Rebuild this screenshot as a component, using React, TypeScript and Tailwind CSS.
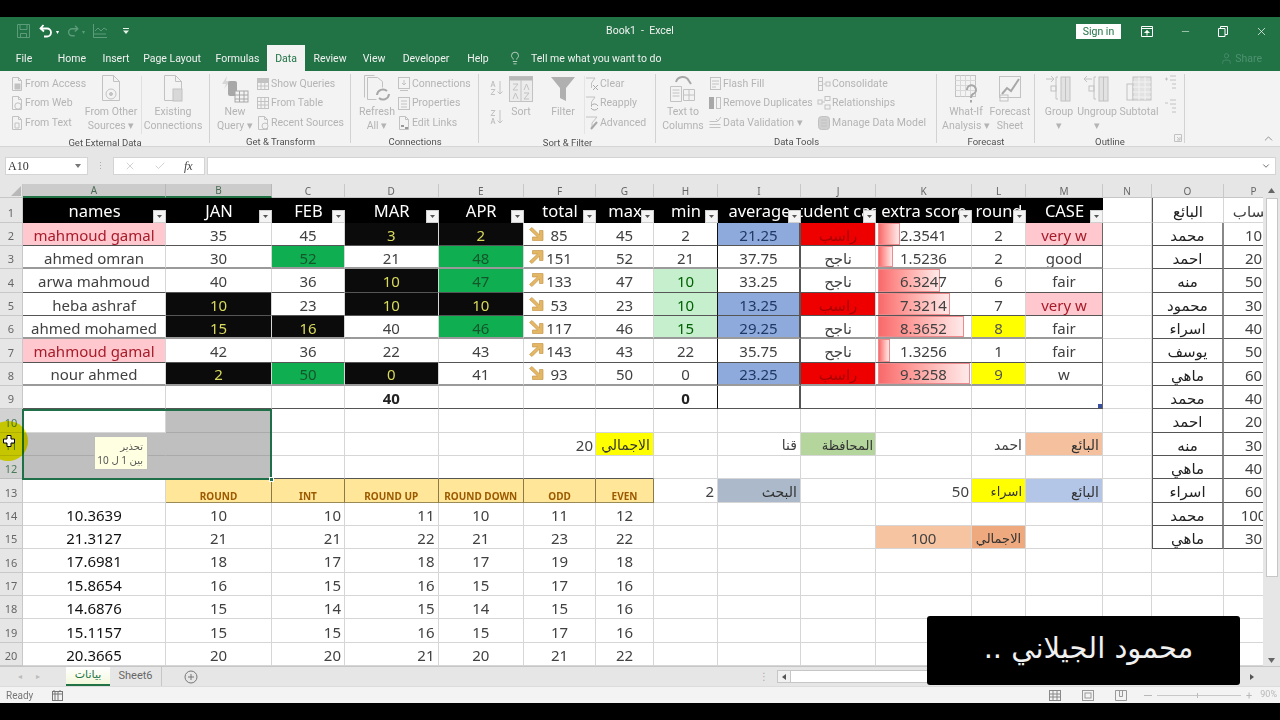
import React from "react";
import { X, Check, Minus, ChevronUp, ChevronDown, Lightbulb, User } from "lucide-react";

const S = "#c2c2c2";
const Svg = ({ w, h, children, className = "" }: { w: number; h: number; children: React.ReactNode; className?: string }) => (
  <svg width={w} height={h} viewBox={`0 0 ${w} ${h}`} fill="none" stroke={S} strokeWidth="1" className={"shrink-0 " + className}>
    {children}
  </svg>
);
const SmallDoc = ({ b }: { b?: React.ReactNode }) => (
  <Svg w={14} h={16}>
    <path d="M2.5 1.5h6l3 3v10h-9z" />
    <path d="M8.5 1.5v3h3" />
    {b}
  </Svg>
);
const Grid4 = ({ hd }: { hd?: boolean }) => (
  <Svg w={14} h={16}>
    <rect x="1.5" y="2.5" width="11" height="11" />
    {hd && <rect x="1.5" y="2.5" width="11" height="3" fill={S} />}
    <path d="M1.5 6.5h11M1.5 10h11M5 2.5v11M8.8 2.5v11" />
  </Svg>
);
const BigDoc = ({ children }: { children?: React.ReactNode }) => (
  <Svg w={30} h={30}>
    <path d="M6.5 1.5h11l6 6v19h-17z" />
    <path d="M17.5 1.5v6h6" />
    {children}
  </Svg>
);
const Tiny = ({ children }: { children: React.ReactNode }) => <span className="whitespace-nowrap leading-[12px]">{children}</span>;
const Big = ({ w, icon, l1, l2 }: { w: number; icon: React.ReactNode; l1: string; l2: string }) => (
  <div style={{ width: w }} className="flex flex-col items-center shrink-0">
    <div className="h-[33px] flex items-center justify-center">{icon}</div>
    <div className="text-center leading-[14px] whitespace-nowrap">{l1}</div>
    <div className="text-center leading-[14px] whitespace-nowrap">{l2}</div>
  </div>
);
const Small = ({ w, items }: { w: number; items: [React.ReactNode, string][] }) => (
  <div style={{ width: w }} className="flex flex-col shrink-0 pt-[2px]">
    {items.map(([ic, t]) => (
      <div key={t} className="h-[19.5px] flex items-center gap-[1px]">
        {ic}
        <Tiny>{t}</Tiny>
      </div>
    ))}
  </div>
);
const Group = ({ w, label, pl = 0, children }: { w: number; label: string; pl?: number; children: React.ReactNode }) => (
  <div style={{ width: w }} className="relative shrink-0 flex flex-col h-full">
    <div style={{ paddingLeft: pl }} className="flex-1 flex items-start pt-[1px]">{children}</div>
    <div className="h-[14px] text-center text-[9.5px] leading-[17px] text-[#505050]">{label}</div>
    <div className="absolute right-0 top-[3px] bottom-[3px] w-px bg-[#d2d2d2]" />
  </div>
);

const Ribbon = () => (
  <div className="h-[76px] flex bg-[#f3f3f3] text-[#b4b4b4] border-b border-[#d5d5d5] text-[10.5px] relative font-['Roboto',sans-serif]">
    <Group w={210} label="Get External Data" pl={10}>
      <Small w={74} items={[
        [<SmallDoc b={<rect x="5" y="8" width="5" height="5" fill={S} />} />, "From Access"],
        [<SmallDoc b={<circle cx="8" cy="11" r="3.2" />} />, "From Web"],
        [<SmallDoc b={<path d="M5 8h4v5H5z" />} />, "From Text"],
      ]} />
      <Big w={54} l1="From Other" l2="Sources ▾" icon={<BigDoc><circle cx="15" cy="20" r="5" fill="#f3f3f3" /><circle cx="15" cy="20" r="1.5" fill={S} /></BigDoc>} />
      <div className="w-px h-[58px] bg-[#e0e0e0] mt-[4px] mx-[3px]" />
      <Big w={56} l1="Existing" l2="Connections" icon={<BigDoc><rect x="15" y="15" width="9" height="12" fill="#d8d8d8" /></BigDoc>} />
    </Group>
    <Group w={141} label="Get & Transform" pl={6}>
      <Big w={38} l1="New" l2="Query ▾" icon={
        <Svg w={32} h={30}>
          <path d="M8 2 3 10h4l-2 5 6-8H7z" fill="#d6d6d6" stroke="none" />
          <rect x="9" y="7" width="9" height="15" rx="2" fill="#a8a8a8" stroke="none" />
          <rect x="16" y="17" width="13" height="11" fill="#f3f3f3" stroke="#a8a8a8" />
          <path d="M16 21h13M16 25h13M20.5 17v11M25 17v11" stroke="#a8a8a8" />
        </Svg>} />
      <div className="w-[2px]" />
      <Small w={95} items={[[<Grid4 hd />, "Show Queries"], [<Grid4 />, "From Table"], [<SmallDoc b={<circle cx="9" cy="11" r="3" fill="#f3f3f3" />} />, "Recent Sources"]]} />
    </Group>
    <Group w={128} label="Connections" pl={8}>
      <Big w={36} l1="Refresh" l2="All ▾" icon={
        <Svg w={30} h={30}>
          <path d="M5.5 3.5h10l5 4v6M5.5 3.5v22h9" />
          <path d="M2.5 1.5h10M2.5 1.5v22" />
          <path d="M15 21a6 6 0 0 1 10-4M27 20a6 6 0 0 1-10 4" stroke="#a8a8a8" strokeWidth="2" />
        </Svg>} />
      <div className="w-[2px]" />
      <Small w={78} items={[
        [<Svg w={14} h={16}><rect x="1.5" y="1.5" width="11" height="11" /><path d="M7 4v5M5 7l2 2 2-2M3 14.5h8" /></Svg>, "Connections"],
        [<Svg w={14} h={16}><rect x="1.5" y="2.5" width="11" height="12" /><path d="M4 6h6M4 9h6M4 12h6" /></Svg>, "Properties"],
        [<SmallDoc b={<path d="M4 11h3M8 13h3" stroke="#9a9a9a" strokeWidth="2" />} />, "Edit Links"],
      ]} />
    </Group>
    <Group w={177} label="Sort & Filter" pl={10}>
      <div className="w-[20px] flex flex-col gap-[11px] pt-[7px]">
        <Svg w={16} h={18}><path d="M11 2v13M8.5 12.5 11 15l2.5-2.5" /><path d="M2 8l2-6 2 6M2.8 6h2.4M2 10.5h4l-4 5h4" /></Svg>
        <Svg w={16} h={18}><path d="M11 2v13M8.5 12.5 11 15l2.5-2.5" /><path d="M2 2.5h4l-4 5h4M2 16l2-6 2 6M2.8 14h2.4" /></Svg>
      </div>
      <Big w={24} l1="Sort" l2="" icon={
        <Svg w={26} h={28}><rect x="1.5" y="1.5" width="23" height="25" fill="#ececec" /><rect x="1.5" y="1.5" width="23" height="4" fill="#b8b8b8" stroke="none" /><path d="M13 5v21" /><path d="M5 9h5l-5 6h5M16 15l2.5-6 2.5 6M5 24l2.5-6 2.5 6M16 18h5l-5 6h5" /></Svg>} />
      <div className="w-[9px]" />
      <Big w={42} l1="Filter" l2="" icon={<Svg w={26} h={28}><path d="M1 2h24l-9 11v13l-6-3V13z" fill="#b0b0b0" stroke="none" /></Svg>} />
      <div className="w-px h-[58px] bg-[#e4e4e4] mt-[4px]" />
      <Small w={62} items={[
        [<Svg w={14} h={16}><path d="M1 2h9L6.5 7v5" /><path d="M8 9l5 5M13 9l-5 5" stroke="#a8a8a8" /></Svg>, "Clear"],
        [<Svg w={14} h={16}><path d="M1 2h9L6.5 7v5" /><path d="M6 11a4 4 0 0 1 7 0M13 13a4 4 0 0 1-7 0" stroke="#a8a8a8" /></Svg>, "Reapply"],
        [<Svg w={14} h={16}><path d="M1 2h11L7 8v5" /><path d="M6 14l6-7" stroke="#a8a8a8" strokeWidth="2" /></Svg>, "Advanced"],
      ]} />
    </Group>
    <Group w={281} label="Data Tools" pl={8}>
      <Big w={38} l1="Text to" l2="Columns" icon={
        <Svg w={30} h={30}><path d="M8 8a7 7 0 0 1 13-1l2 3" stroke="#a8a8a8" strokeWidth="2" /><path d="M2.5 12.5h11v15h-11zM4.5 16h7M4.5 19h7M4.5 22h7M15.5 15.5h11v11h-11zM15.5 21h11M21 15.5v11" /></Svg>} />
      <div className="w-[6px]" />
      <Small w={109} items={[
        [<Svg w={14} h={16}><rect x="2.5" y="1.5" width="10" height="12" /><path d="M4 5h7M4 8h7M4 11h4" /></Svg>, "Flash Fill"],
        [<Svg w={14} h={16}><rect x="1" y="2" width="5" height="12" fill="#a8a8a8" stroke="none" /><rect x="8.5" y="2.5" width="4" height="11" /></Svg>, "Remove Duplicates"],
        [<Svg w={14} h={16}><path d="M1.5 6.5h8M1.5 9.5h11M1.5 12.5h11M8 4l2 2 3-4" /></Svg>, "Data Validation   ▾"],
      ]} />
      <Small w={115} items={[
        [<Svg w={14} h={16}><rect x="1.5" y="1.5" width="4" height="13" /><path d="M1.5 5.5h4M1.5 9.5h4M6.5 8h2" /><rect x="9" y="6" width="4" height="4" /></Svg>, "Consolidate"],
        [<Svg w={14} h={16}><rect x="1" y="5" width="4" height="4" /><rect x="8" y="1.5" width="5" height="4" /><rect x="8" y="10" width="5" height="4" /><path d="M5 7h3" /></Svg>, "Relationships"],
        [<Svg w={14} h={16}><rect x="1.5" y="1.5" width="11" height="13" rx="3" fill="#d0d0d0" /><path d="M4 5h6M4 8h6M4 11h6" /></Svg>, "Manage Data Model"],
      ]} />
    </Group>
    <Group w={98} label="Forecast" pl={4}>
      <Big w={50} l1="What-If" l2="Analysis ▾" icon={
        <Svg w={24} h={30}><rect x="1.5" y="1.5" width="20" height="21" /><path d="M1.5 6.5h20M1.5 11.5h20M1.5 16.5h20M6.5 1.5v21M11.5 1.5v21M16.5 1.5v21" stroke="#d8d8d8" /><path d="M13 16a4.5 4.5 0 1 1 6 4c-2 1-2 2-2 4M17 26v2.5" stroke="#a8a8a8" strokeWidth="2" /></Svg>} />
      <Big w={38} l1="Forecast" l2="Sheet" icon={
        <Svg w={24} h={30}><rect x="1.5" y="2.5" width="21" height="21" /><path d="M4 20l5-6 4 3 8-12" stroke="#a8a8a8" strokeWidth="2" /><rect x="2" y="21" width="8" height="6" /></Svg>} />
    </Group>
    <Group w={150} label="Outline" pl={5}>
      <Big w={38} l1="Group" l2="▾" icon={
        <Svg w={28} h={28}><path d="M1 4h8M6 1l3 3-3 3" /><path d="M13 2h-2v22h2" /><rect x="6" y="11" width="5" height="5" /><rect x="16" y="2" width="9" height="24" fill="#e2e2e2" /><path d="M20.5 2v24" /></Svg>} />
      <Big w={38} l1="Ungroup" l2="▾" icon={
        <Svg w={28} h={28}><path d="M9 4H1M4 1 1 4l3 3" /><path d="M13 2h-2v22h2" /><rect x="6" y="11" width="5" height="5" /><rect x="16" y="2" width="9" height="24" fill="#e2e2e2" /><path d="M20.5 2v24" /></Svg>} />
      <Big w={46} l1="Subtotal" l2="" icon={
        <Svg w={28} h={28}><rect x="2" y="9" width="6" height="16" /><rect x="8" y="2" width="18" height="23" fill="#e2e2e2" /><path d="M8 7h18M8 12h18M8 17h18M8 22h18M14 2v23M20 2v23" stroke="#f3f3f3" /></Svg>} />
      <div className="w-[16px] flex flex-col gap-[5px] pl-[2px] pt-[2px]">
        <Svg w={13} h={19}><path d="M1 5h3M2.5 3.5v3M6 2h6M6 6h6M8 10h4M8 14h4" /></Svg>
        <Svg w={13} h={19}><path d="M1 5h3M6 2h6M6 6h6M8 10h4M8 14h4" /></Svg>
      </div>
      <Svg w={8} h={8} className="absolute right-[3px] bottom-[4px]"><path d="M.5.5h7v7h-7zM3 3l3 3M3 6h3V3" /></Svg>
    </Group>
    <div className="flex-1 relative">
      <ChevronUp size={13} strokeWidth={1.25} className="absolute right-[5px] bottom-[1px] text-[#666]" />
    </div>
  </div>
);

const tabs: [string, number][] = [["File", 48], ["Home", 48], ["Insert", 40], ["Page Layout", 72], ["Formulas", 59], ["Data", 38], ["Review", 50], ["View", 38], ["Developer", 66], ["Help", 38]];

const TitleBar = () => (
  <div className="h-[54px] bg-[#217346] text-white font-['Roboto',sans-serif]">
    <div className="h-[28px] flex items-center relative">
      <div className="flex items-center pl-[17px]">
        <svg width="13" height="14" viewBox="0 0 13 14" fill="none" stroke="#5c9c7a"><path d="M.5.5h12v13H.5zM3 .5v5h7v-5M3.5 13.5v-4h6v4" /></svg>
        <svg width="16" height="16" viewBox="0 0 16 16" fill="none" stroke="#fff" strokeWidth="1.8" className="ml-[8px]"><path d="M5.5 2 2.5 5.5l3.5 3M3 5.5h6a3.7 3.7 0 0 1 0 8H6" /></svg>
        <span className="ml-[2px] text-[6px] text-white">▾</span>
        <svg width="14" height="14" viewBox="0 0 16 16" fill="none" stroke="#5c9c7a" strokeWidth="1.6" className="ml-[7px]"><path d="M10.5 2l3 3.5-3.5 3M13 5.5H7a3.7 3.7 0 0 0 0 8h3" /></svg>
        <span className="ml-[2px] text-[6px] text-[#5c9c7a]">▾</span>
        <svg width="14" height="14" viewBox="0 0 14 14" fill="none" stroke="#5c9c7a" className="ml-[8px]"><path d="M.5 0v13.5H14M2 7l3-3 3 3 3-3 3 2M1 10h12" /></svg>
        <svg width="7" height="8" viewBox="0 0 7 8" fill="#e8f0ea" className="ml-[16px]"><path d="M0 1h6v1H0zM0 3.5h6L3 7z" /></svg>
      </div>
      <div className="absolute left-0 right-0 top-0 h-full flex items-center justify-center text-[10.5px] text-[#f2f2f2] pointer-events-none">Book1&nbsp;&nbsp;-&nbsp;&nbsp;Excel</div>
      <div className="ml-auto flex items-center">
        <div className="w-[45px] h-[15px] bg-white text-[#217346] text-[10.5px] leading-[15px] text-center mr-[7px]">Sign in</div>
        <div className="w-[38px] flex justify-center">
          <svg width="12" height="11" viewBox="0 0 12 11" fill="none" stroke="#fff"><path d="M.5.5h11v10H.5zM.5 2.5h11" /><path d="M3.5 7 6 4.5 8.5 7M6 4.5v5" fill="#fff" /></svg>
        </div>
        <div className="w-[38px] flex justify-center"><Minus size={11} strokeWidth={1.2} /></div>
        <div className="w-[38px] flex justify-center">
          <svg width="10" height="11" viewBox="0 0 10 11" fill="none" stroke="#fff"><path d="M.5 2.5h6.5v8H.5zM2.5 2.5v-2h7v8H7" /></svg>
        </div>
        <div className="w-[38px] flex justify-center"><X size={13} strokeWidth={1.3} /></div>
      </div>
    </div>
    <div className="h-[26px] flex text-[10.5px] leading-[27px] relative">
      {tabs.map(([t, w]) => (
        <div key={t} style={{ width: w }} className={"text-center shrink-0 " + (t === "Data" ? "bg-[#f3f3f3] text-[#217346]" : "text-[#f1f1f1]")}>{t}</div>
      ))}
      <Lightbulb size={14} strokeWidth={1.2} className="ml-[11px] mt-[6px] text-[#f1f1f1]" />
      <span className="ml-[9px] text-[#f1f1f1]">Tell me what you want to do</span>
      <div className="ml-auto mr-[18px] flex items-center gap-[2px] text-[#4f9270]">
        <User size={13} strokeWidth={1.3} />
        <span>Share</span>
      </div>
    </div>
  </div>
);

const FormulaBar = () => (
  <div className="h-[37px] bg-[#e6e6e6] pt-[10px] flex items-start">
    <div className="ml-[5px] w-[83px] h-[18px] bg-white border border-[#d4d4d4] flex items-center justify-between px-[2px] text-[12px] text-[#333] font-['Liberation_Serif',serif]">
      <span>A10</span>
      <svg width="6" height="4" className="mr-[4px]"><path d="M0 0h6L3 4z" fill="#777" /></svg>
    </div>
    <div className="w-[25px] h-[18px] flex items-center justify-center text-[#aaa] text-[9px]">⋮</div>
    <div className="w-[92px] h-[18px] bg-white border border-[#d4d4d4] flex items-center">
      <X size={12} strokeWidth={1.2} className="ml-[10px] text-[#b4b4b4]" />
      <Check size={12} strokeWidth={1.2} className="ml-[18px] text-[#b4b4b4]" />
      <span className="ml-[18px] text-[12px] italic font-['Liberation_Serif',serif] text-[#444] leading-none">fx</span>
    </div>
    <div className="ml-[2px] w-[1069px] h-[18px] bg-white border border-[#d4d4d4] flex items-center justify-end pr-[4px]">
      <ChevronDown size={10} strokeWidth={2} className="text-[#555]" />
    </div>
  </div>
);

const PINK = "bg-[#ffc7ce] text-[#a61c2a]";
const BLK = "bg-[#0b0b0b] text-[#d9d95c]";
const GRN = "bg-[#0fae50] text-[#14562c]";
const LG = "bg-[#c6efce] text-[#006100]";
const BLUE = "bg-[#8ea9db] text-[#1f3864]";
const RED = "bg-[#ef0000] text-[#a80000]";
const YEL = "bg-[#ffff00] text-[#555555]";
const STY: Record<string, string> = { P: PINK, K: BLK, G: GRN, L: LG, B: BLUE, R: RED, Y: YEL };

const T: string[][] = [
  ["mahmoud gamal|P", "35", "45", "3|K", "2|K", "85|d", "45", "2", "21.25|B", "راسب|R", "2.3541", "2", "very w|P"],
  ["ahmed omran", "30", "52|G", "21", "48|G", "151|u", "52", "21", "37.75", "ناجح", "1.5236", "2", "good"],
  ["arwa mahmoud", "40", "36", "10|K", "47|G", "133|u", "47", "10|L", "33.25", "ناجح", "6.3247", "6", "fair"],
  ["heba ashraf", "10|K", "23", "10|K", "10|K", "53|d", "23", "10|L", "13.25|B", "راسب|R", "7.3214", "7", "very w|P"],
  ["ahmed mohamed", "15|K", "16|K", "40", "46|G", "117|d", "46", "15|L", "29.25|B", "ناجح", "8.3652", "8|Y", "fair"],
  ["mahmoud gamal|P", "42", "36", "22", "43", "143|u", "43", "22", "35.75", "ناجح", "1.3256", "1", "fair"],
  ["nour ahmed", "2|K", "50|G", "0|K", "41", "93|d", "50", "0", "23.25|B", "راسب|R", "9.3258", "9|Y", "w"],
];
const BARS = [22, 15, 62, 72, 86, 12, 92];
const HEAD = ["names", "JAN", "FEB", "MAR", "APR", "total", "max", "min", "average", "student case", "extra score", "round", "CASE"];
const COLS = "ABCDEFGHIJKLMNOP".split("");
const LOWER: string[][] = [
  ["10.3639", "10", "10", "11", "10", "11", "12"],
  ["21.3127", "21", "21", "22", "21", "23", "22"],
  ["17.6981", "18", "17", "18", "17", "19", "18"],
  ["15.8654", "16", "15", "16", "15", "17", "16"],
  ["14.6876", "15", "14", "15", "14", "15", "16"],
  ["15.1157", "15", "15", "16", "15", "17", "16"],
  ["20.3665", "20", "20", "21", "20", "21", "22"],
];
const SELLER = ["محمد", "احمد", "منه", "محمود", "اسراء", "يوسف", "ماهي", "محمد", "احمد", "منه", "ماهي", "اسراء", "محمد", "ماهي"];
const ACC = ["10", "20", "50", "30", "40", "50", "60", "40", "20", "30", "40", "60", "100", "30"];

const Arrow = ({ up }: { up: boolean }) => (
  <svg width="16" height="16" viewBox="0 0 16 16" fill="#e4b766" stroke="#c79a4c" strokeWidth="0.7" className={"shrink-0 ml-[4px] -mt-[3px] " + (up ? "-scale-y-100" : "")}>
    <path d="M1.5 3.5 4 1.5l7.5 7.5V4.5H15V14.5H4.5V11H9.5z" />
  </svg>
);
const FilterBtn = () => (
  <div className="absolute right-0 bottom-0 w-[13px] h-[13px] bg-[#f4f4f4] border border-[#cfcfcf] flex items-center justify-center">
    <svg width="5" height="3"><path d="M0 0h5L2.5 3z" fill="#555" /></svg>
  </div>
);

const BASE = "relative flex items-center overflow-hidden whitespace-nowrap border-r border-b pt-[3px]";

const cellFor = (col: string, r: number): { t?: React.ReactNode; k: string } => {
  const ci = COLS.indexOf(col);
  let b = "border-r-[#d6d6d6] border-b-[#d6d6d6]";
  let k = "justify-center";
  let t: React.ReactNode = undefined;
  if (col === "N") return { k: "border-r-[#d6d6d6] border-b-[#d6d6d6]" };
  if (col === "O" || col === "P") {
    if (r <= 15) {
      b = col === "O" ? "border-l border-l-[#555] border-r-2 border-r-[#888] border-b-[#555]" : "border-r-[#d6d6d6] border-b-[#555]";
      if (r === 1) { b = col === "O" ? "border-l border-l-[#555] border-r-[#d6d6d6] border-b-[#d6d6d6]" : "border-r-[#d6d6d6] border-b-[#d6d6d6]"; }
      t = r === 1 ? (col === "O" ? "البائع" : "حساب") : col === "O" ? SELLER[r - 2] : ACC[r - 2];
      if (col === "O") k = "justify-center text-[#222]";
    }
    return { t, k: `${k} ${b}` };
  }
  if (r >= 2 && r <= 9) {
    const thick = r === 3 || r === 6 || r === 8;
    b = (thick ? "border-b-2 border-b-[#9a9a9a] " : "border-b-[#555] ") + "border-r-[#d6d6d6]";
    if (col === "M") b = (thick ? "border-b-2 border-b-[#9a9a9a] " : "border-b-[#555] ") + "border-r-[#666]";
    if (col === "H") b = (thick ? "border-b-2 border-b-[#9a9a9a] " : "border-b-[#555] ") + "border-r-[#111]";
    if (col === "I") b = (thick ? "border-b-2 border-b-[#9a9a9a] " : "border-b-[#555] ") + "border-r-2 border-r-[#555]";
  }
  if (r === 9) {
    if (col === "D") { t = "40"; k = "justify-center font-bold text-[#222]"; }
    if (col === "H") { t = "0"; k = "justify-center font-bold text-[#222]"; }
  }
  if (r === 12 && "BCDEFG".includes(col)) b = "border-b-[#555] border-r-[#d6d6d6]";
  if (r >= 2 && r <= 8 && ci <= 12) {
    const [v, s] = T[r - 2][ci].split("|");
    t = v;
    if (s === "u" || s === "d") {
      t = (
        <>
          <Arrow up={s === "u"} />
          <span className="w-[30px] text-center">{v}</span>
        </>
      );
      k = "justify-start";
    } else if (s) k = `justify-center ${STY[s]}`;
    if (col === "K") {
      t = (
        <>
          <div style={{ width: BARS[r - 2] }} className="absolute left-[2px] top-0 bottom-0 border border-[#ee8a8b] bg-gradient-to-r from-[#f8696b] to-[#fdeaea]" />
          <span className="relative">{v}</span>
        </>
      );
    }
  }
  const sp = (text: string, cls: string) => { t = text; k = cls; };
  if (r === 11) {
    if (col === "F") sp("20", "justify-end pr-[2px]");
    if (col === "G") sp("الاجمالي", "justify-end pr-[3px] bg-[#ffff00] text-[#333] text-[14px]");
    if (col === "I") sp("قنا", "justify-end pr-[3px] text-[14px]");
    if (col === "J") sp("المحافظة", "justify-end pr-[2px] bg-[#b4d59c] text-[#333] text-[13px]");
    if (col === "L") sp("احمد", "justify-end pr-[3px] text-[14px]");
    if (col === "M") sp("البائع", "justify-end pr-[3px] bg-[#f5c09d] text-[#333] text-[14px]");
  }
  if (r === 13) {
    if (ci >= 1 && ci <= 6) {
      t = ["ROUND", "INT", "ROUND UP", "ROUND DOWN", "ODD", "EVEN"][ci - 1];
      k = "justify-center items-end !pt-0 pb-[1px] bg-[#ffe699] text-[#9c5a00] font-bold text-[10px]";
      b = "border-b-[#9a8a55] border-r-[#8a7a4a]";
    }
    if (col === "H") sp("2", "justify-end pr-[3px]");
    if (col === "I") sp("البحث", "justify-end pr-[3px] bg-[#acb9ca] text-[#333] text-[14px]");
    if (col === "K") sp("50", "justify-end pr-[2px]");
    if (col === "L") sp("اسراء", "justify-end pr-[3px] bg-[#ffff00] text-[#333] text-[13px]");
    if (col === "M") sp("البائع", "justify-end pr-[3px] bg-[#b4c6e7] text-[#333] text-[14px]");
  }
  if (r === 15) {
    if (col === "K") sp("100", "justify-center bg-[#f6c4a0]");
    if (col === "L") sp("الاجمالي", "justify-center bg-[#eea97f] text-[#333] text-[13px]");
  }
  if (r >= 14 && ci <= 6) {
    t = LOWER[r - 14][ci];
    k = ci === 0 ? "justify-center text-[#111]" : ci === 2 || ci === 3 ? "justify-end pr-[3px]" : "justify-center";
  }
  if (r === 10 || r === 11 || r === 12) {
    if (col === "B" || (col === "A" && r > 10)) k = "bg-[#bfbfbf]";
    if (col === "A" && r > 10) b = "border-r-[#bfbfbf] border-b-[#aaaaaa]";
    if (col === "B") b = "border-r-[#bfbfbf] border-b-[#aaaaaa]";
  }
  return { t, k: `${k} ${b}` };
};

const Sheet = () => {
  const out: React.ReactNode[] = [];
  out.push(
    <div key="corner" className="bg-[#e6e6e6] border-r border-b border-[#c6c6c6] relative">
      <svg width="10" height="10" className="absolute right-[1px] bottom-[1px]"><path d="M10 0v10H0z" fill="#b8b8b8" /></svg>
    </div>
  );
  COLS.forEach((c) => {
    const on = c === "A" || c === "B";
    out.push(
      <div key={"h" + c} className={"flex items-center justify-center text-[10px] border-r " + (on ? "bg-[#cbcbcb] text-[#4a6b56] border-[#b8b8b8] border-b-2 border-b-[#217346]" : "bg-[#e6e6e6] text-[#666] border-[#c8c8c8] border-b border-b-[#c6c6c6]")}>{c}</div>
    );
  });
  for (let r = 1; r <= 20; r++) {
    const on = r >= 10 && r <= 12;
    out.push(
      <div key={"r" + r} className={"flex items-end justify-center pb-[2px] text-[11px] leading-[14px] border-r border-b " + (on ? "bg-[#d2d2d2] text-[#4a7a5a] border-[#bbb] border-r-[#217346]" : "bg-[#e6e6e6] text-[#666] border-[#c8c8c8]")}>{r}</div>
    );
    COLS.forEach((col, ci) => {
      if (r === 1 && ci <= 12) {
        out.push(
          <div key={col + r} className="relative bg-black text-white text-[16.5px] pt-[1px] flex items-center justify-center overflow-hidden whitespace-nowrap">
            <span>{HEAD[ci]}</span>
            <FilterBtn />
          </div>
        );
        return;
      }
      const { t, k } = cellFor(col, r);
      const marker = col === "M" && r === 9;
      out.push(
        <div key={col + r} className={`${BASE} ${k}`}>
          {t}
          {marker && <div className="absolute right-0 bottom-0 w-[4px] h-[4px] bg-[#3b4fa0]" />}
        </div>
      );
    });
  }
  return (
    <div className="relative w-[1263px] h-[482px] overflow-hidden bg-white text-[15px] leading-none text-[#414141] font-['Noto_Sans','DejaVu_Sans',sans-serif]">
      <div className="grid grid-cols-[23px_143px_106px_73px_93.5px_85.5px_72px_58px_64px_83px_75px_96px_54px_77px_49px_72px_60px] grid-rows-[14px_24.5px] auto-rows-[23.35px]">
        {out}
      </div>
      {/* selection outline */}
      <div className="absolute left-[22px] top-[225px] w-[250px] h-[71px] border-2 border-[#1f7048]" />
      <div className="absolute left-[269px] top-[293px] w-[5px] h-[5px] bg-[#1f7048] border border-white" />
      {/* validation tooltip */}
      <div dir="rtl" className="absolute left-[94px] top-[252px] w-[54px] h-[34px] bg-[#ffffe1] border border-[#bdbdbd] pr-[4px] pt-[2px] text-[10px] leading-[14px] text-[#555]">
        <div>تحذير</div>
        <div>بين 1 ل 10</div>
      </div>
      {/* pointer highlight */}
      <div className="absolute left-[-12px] top-[237px] w-[40px] h-[40px] rounded-full bg-[#f0f000] mix-blend-multiply" />
      <svg width="12" height="12" viewBox="0 0 12 12" className="absolute left-[3px] top-[251px]"><path d="M4 .5h4V4h3.5v4H8v3.5H4V8H.5V4H4z" fill="#fff" stroke="#000" /></svg>
    </div>
  );
};

const VScroll = () => (
  <div className="w-[17px] h-[482px] bg-[#e6e6e6] relative flex flex-col items-center">
    <svg width="7" height="5" className="mt-[4px]"><path d="M3.5 0 7 5H0z" fill="#666" /></svg>
    <div className="mt-[5px] w-[12px] h-[379px] bg-white border border-[#c6c6c6]" />
    <svg width="7" height="5" className="absolute bottom-[3px]"><path d="M0 0h7L3.5 5z" fill="#666" /></svg>
  </div>
);

const SheetTabs = () => (
  <div className="h-[20px] bg-[#e6e6e6] border-t border-[#c6c6c6] flex items-center text-[11px] text-[#666] font-['Roboto','DejaVu_Sans',sans-serif] relative">
    <span className="ml-[18px] text-[8px] text-[#bbb]">◂</span>
    <span className="ml-[14px] text-[8px] text-[#bbb]">▸</span>
    <div className="ml-[26px] w-[44px] h-[19px] bg-gradient-to-b from-white to-[#f3f8dc] border-b-2 border-[#217346] text-[#217346] text-center leading-[16px] -mt-[1px]">بيانات</div>
    <div className="w-[52px] h-[19px] text-center leading-[17px] border-r border-[#c6c6c6] -mt-[1px]">Sheet6</div>
    <svg width="14" height="14" viewBox="0 0 14 14" fill="none" stroke="#777" className="ml-[22px]"><circle cx="7" cy="7" r="6" /><path d="M4 7h6M7 4v6" /></svg>
    <span className="ml-auto mr-[8px] text-[#aaa] text-[10px]">⋮</span>
    <div className="w-[459px] h-[13px] border border-[#c6c6c6] bg-white flex items-stretch">
      <div className="w-[13px] bg-[#f1f1f1] border-r border-[#c6c6c6] flex items-center justify-center">
        <svg width="4" height="6"><path d="M4 0v6L0 3z" fill="#555" /></svg>
      </div>
    </div>
    <div className="w-[27px] flex justify-center pr-[5px]"><svg width="4" height="6" className="ml-[10px]"><path d="M0 0v6l4-3z" fill="#555" /></svg></div>
    <div className="w-[17px]" />
  </div>
);

const Status = () => (
  <div className="h-[17px] bg-[#f3f3f3] border-t border-[#dcdcdc] flex items-center text-[10px] text-[#777] font-['Roboto',sans-serif]">
    <span className="ml-[6px]">Ready</span>
    <svg width="11" height="11" viewBox="0 0 11 11" fill="none" stroke="#777" className="ml-[19px]"><rect x=".5" y="1.5" width="10" height="9" /><path d="M.5 4h10M3 1.5v9M6 1.5v9M2 0v2M8 0v2" /></svg>
    <div className="ml-auto flex items-center text-[#b8b8b8]">
      <svg width="12" height="11" viewBox="0 0 12 11" fill="none" stroke="#888"><rect x=".5" y=".5" width="11" height="10" /><path d="M.5 4h11M.5 7h11M4 .5v10M8 .5v10" /></svg>
      <svg width="12" height="11" viewBox="0 0 12 11" fill="none" stroke="#999" className="ml-[21px]"><rect x=".5" y=".5" width="11" height="10" /><rect x="3" y="3" width="6" height="5" /></svg>
      <svg width="12" height="11" viewBox="0 0 12 11" fill="none" stroke="#999" className="ml-[21px]"><path d="M.5.5h11v10H.5zM4.5.5v6h3v-6" /></svg>
      <span className="ml-[17px] w-[8px] h-px bg-[#b8b8b8]" />
      <div className="ml-[5px] w-[84px] h-px bg-[#c8c8c8] relative"><div className="absolute left-[40px] -top-[2px] w-px h-[5px] bg-[#bbb]" /></div>
      <span className="ml-[5px] text-[11px] leading-none">+</span>
      <span className="ml-[8px] mr-[3px] text-[9px]">90%</span>
    </div>
  </div>
);

export default function App() {
  return (
    <div className="relative w-[1280px] h-[720px] overflow-hidden bg-black flex flex-col">
      <div className="h-[17px] bg-black" />
      <TitleBar />
      <Ribbon />
      <FormulaBar />
      <div className="flex">
        <Sheet />
        <VScroll />
      </div>
      <SheetTabs />
      <Status />
      <div className="flex-1 bg-black" />
      <div dir="rtl" className="absolute left-[927px] top-[616px] w-[313px] h-[69px] bg-black rounded-[3px] flex items-center justify-center pl-[10px] pb-[4px] text-[29px] text-[#f0f0f0] font-['DejaVu_Sans',sans-serif]">
        محمود الجيلاني ..
      </div>
    </div>
  );
}
